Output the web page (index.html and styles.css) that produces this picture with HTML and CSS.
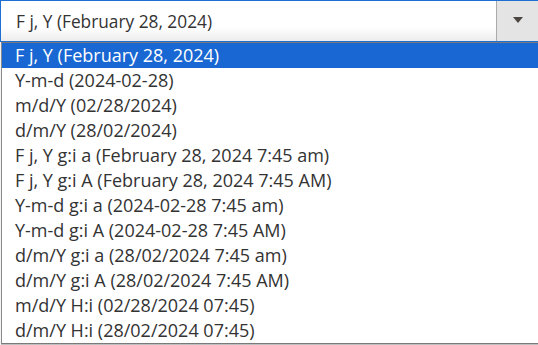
FILE: index.html
```html
<!DOCTYPE html>
<html>
<head>
<meta charset="utf-8">
<link rel="stylesheet" href="styles.css">
</head>
<body>
<div class="select">
  <div class="select-value">F j, Y (February 28, 2024)</div>
  <div class="select-button"><span class="arrow"></span></div>
</div>
<ul class="options">
  <li class="option selected">F j, Y (February 28, 2024)</li>
  <li class="option">Y-m-d (2024-02-28)</li>
  <li class="option">m/d/Y (02/28/2024)</li>
  <li class="option">d/m/Y (28/02/2024)</li>
  <li class="option">F j, Y g:i a (February 28, 2024 7:45 am)</li>
  <li class="option">F j, Y g:i A (February 28, 2024 7:45 AM)</li>
  <li class="option">Y-m-d g:i a (2024-02-28 7:45 am)</li>
  <li class="option">Y-m-d g:i A (2024-02-28 7:45 AM)</li>
  <li class="option">d/m/Y g:i a (28/02/2024 7:45 am)</li>
  <li class="option">d/m/Y g:i A (28/02/2024 7:45 AM)</li>
  <li class="option">m/d/Y H:i (02/28/2024 07:45)</li>
  <li class="option">d/m/Y H:i (28/02/2024 07:45)</li>
</ul>
</body>
</html>
```
FILE: styles.css
```css
html, body {
  margin: 0;
  padding: 0;
  background: #fff;
}
body {
  width: 538px;
  height: 345px;
  overflow: hidden;
  font-family: "Open Sans", "Noto Sans", sans-serif;
  color: #333;
}
.select {
  display: flex;
  height: 42px;
  box-sizing: border-box;
  border-top: 1px solid #1d6fd6;
  border-left: 1px solid #1d6fd6;
  border-bottom: 1px solid #1d6fd6;
}
.select-value {
  flex: 1;
  display: flex;
  align-items: center;
  padding-left: 15px;
  font-size: 17.3px;
  color: #333;
  background: linear-gradient(to bottom, #fff 0%, #fff 65%, #ececec 100%);
}
.select-button {
  width: 41px;
  border-left: 1px solid #aaa;
  background: #e4e4e4;
  display: flex;
  align-items: center;
  justify-content: center;
}
.arrow {
  width: 0;
  height: 0;
  border-left: 5px solid transparent;
  border-right: 5px solid transparent;
  border-top: 6px solid #4b4641;
  margin-bottom: 2px;
}
.options {
  list-style: none;
  margin: 0 0 0 1px;
  padding: 0;
  border-top: 1px solid #7a7a7a;
  border-left: 1px solid #8a8a8a;
  border-bottom: 1px solid #7a7a7a;
  box-shadow: 0 1px 1px rgba(0,0,0,0.25);
}
.option {
  height: 25px;
  line-height: 25px;
  padding-left: 13px;
  font-size: 18px;
  color: #333;
  white-space: nowrap;
}
.option.selected {
  background: #1967d2;
  color: #fff;
}
```
